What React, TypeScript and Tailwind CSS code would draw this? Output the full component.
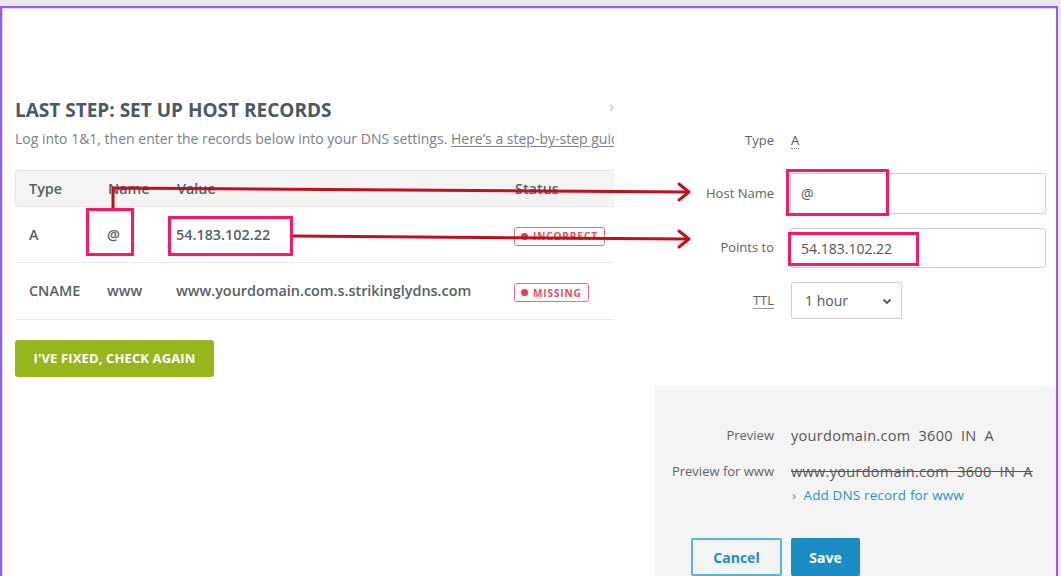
import React from "react";

const Badge = ({ label }: { label: string }) => (
  <span className="inline-flex items-center gap-[5px] rounded-[3px] border border-[#ea6d77] px-[6px] h-[19px] text-[10px] font-bold tracking-[0.09em] text-[#e4505e] leading-none">
    <span className="w-[7px] h-[7px] rounded-full bg-[#e83a4a]" />
    {label}
  </span>
);

export default function App() {
  return (
    <div className="relative w-[1061px] h-[576px] overflow-hidden bg-[#e9eaed] pt-[6px]" style={{ fontFamily: '"Open Sans", "Noto Sans", sans-serif' }}>
      <div className="w-[1058px] h-[600px] border-2 border-[#9c58f7] bg-white">
        <div className="h-full border-l border-t border-[#dcdce3] flex">
          {/* Left column */}
          <div className="w-[611px] pl-[12px] pt-[89px] overflow-hidden shrink-0 relative">
            <div className="absolute right-0 top-[85px] text-[#b8bcc0] text-[16px]">›</div>
            <h1 className="text-[19px] leading-[24px] font-bold text-[#4b5963] whitespace-nowrap">LAST STEP: SET UP HOST RECORDS</h1>
            <p className="mt-[7px] text-[14px] leading-[20px] text-[#7b8188] whitespace-nowrap">
              Log into 1&amp;1, then enter the records below into your DNS settings.{" "}
              <span className="underline underline-offset-2">Here’s a step-by-step guide</span>
            </p>
            <div className="mt-[21px] w-[620px] text-[14.4px] text-[#565f68] font-semibold">
              <div className="h-[37px] flex items-center bg-[#f4f4f4] border border-[#e6e6e6] rounded-l-[3px]">
                <div className="w-[92px] pl-[13px]">Type</div>
                <div className="w-[69px]">Name</div>
                <div className="w-[338px]">Value</div>
                <div>Status</div>
              </div>
              <div className="h-[56px] flex items-center border-b border-[#e8e8e8]">
                <div className="w-[92px] pl-[14px]">A</div>
                <div className="w-[69px]">@</div>
                <div className="w-[338px]">54.183.102.22</div>
                <div><Badge label="INCORRECT" /></div>
              </div>
              <div className="h-[57px] flex items-center border-b border-[#e8e8e8]">
                <div className="w-[92px] pl-[14px]">CNAME</div>
                <div className="w-[69px]">www</div>
                <div className="w-[338px] whitespace-nowrap">www.yourdomain.com.s.strikinglydns.com</div>
                <div><Badge label="MISSING" /></div>
              </div>
            </div>
            <button className="mt-[20px] h-[37px] w-[199px] rounded-[3px] bg-[#96b71b] text-white text-[13px] font-bold tracking-[0.01em]">
              I'VE FIXED, CHECK AGAIN
            </button>
          </div>
          {/* Right column */}
          <div className="flex-1 pl-[41px] pt-[122px] flex flex-col text-[13px] text-[#5f6368]">
            <div className="flex items-center h-[20px]">
              <div className="w-[119px] text-right">Type</div>
              <div className="ml-[17px] text-[#555] border-b border-dotted border-[#888] leading-[15px]">A</div>
            </div>
            <div className="flex items-center mt-[22px]">
              <div className="w-[119px] text-right">Host Name</div>
              <div className="ml-[16px] w-[256px] h-[41px] border border-[#cfcfcf] rounded-[2px] flex items-center pl-[10px] text-[14px] text-[#555]">@</div>
            </div>
            <div className="flex items-center mt-[14px]">
              <div className="w-[119px] text-right">Points to</div>
              <div className="ml-[16px] w-[256px] h-[40px] border border-[#cfcfcf] rounded-[2px] flex items-center pl-[10px] text-[14px] text-[#555]">54.183.102.22</div>
            </div>
            <div className="flex items-center mt-[14px]">
              <div className="w-[119px] text-right"><span className="border-b border-[#999] leading-[15px] inline-block">TTL</span></div>
              <div className="ml-[17px] w-[111px] h-[37px] border border-[#cfcfcf] rounded-[2px] flex items-center justify-between pl-[13px] pr-[8px] text-[14px] text-[#555]">
                <span>1 hour</span>
                <svg width="12" height="12" viewBox="0 0 12 12"><path d="M2.5 4.5 L6 8 L9.5 4.5" fill="none" stroke="#555" strokeWidth="1.8" /></svg>
              </div>
            </div>
            <div className="mt-[67px] flex-1 bg-[#f4f4f4] pt-[41px]">
              <div className="flex items-center h-[18px]">
                <div className="w-[119px] text-right">Preview</div>
                <div className="ml-[17px] text-[14.5px] tracking-[0.02em] text-[#555] whitespace-pre">yourdomain.com  3600  IN  A</div>
              </div>
              <div className="flex items-center h-[18px] mt-[18px]">
                <div className="w-[119px] text-right whitespace-nowrap">Preview for www</div>
                <div className="ml-[17px] text-[14.5px] tracking-[0.02em] text-[#555] whitespace-pre line-through">www.yourdomain.com  3600  IN  A</div>
              </div>
              <div className="ml-[137px] mt-[6px] text-[13.5px] text-[#2196cc] leading-[16px] tracking-[0.01em] whitespace-pre">›  Add DNS record for www</div>
              <div className="flex ml-[36px] mt-[35px] gap-[9px]">
                <button className="w-[91px] h-[38px] border-2 border-[#5bb4da] rounded-[2px] text-[#1f8fc3] font-bold text-[14px]">Cancel</button>
                <button className="w-[69px] h-[38px] bg-[#1a8dc4] rounded-[2px] text-white font-bold text-[14px]">Save</button>
              </div>
            </div>
          </div>
        </div>
      </div>
      <svg className="absolute inset-0 pointer-events-none" width="1061" height="576" viewBox="0 0 1061 576">
        <g fill="none" stroke="#c20f1c" strokeWidth="3" strokeLinejoin="round" strokeLinecap="round">
          <path d="M113 208 L113 188 L688 192" />
          <path d="M679 184 L689 192 L679 200" />
          <path d="M293 236 L688 239" />
          <path d="M679 231 L689 239 L679 247" />
        </g>
        <g fill="none" stroke="#ff1761" strokeWidth="3">
          <rect x="87.5" y="209.5" width="45" height="45" />
          <rect x="169.5" y="217.5" width="122" height="37" />
          <rect x="787.5" y="170.5" width="100" height="44" />
          <rect x="789.5" y="233.5" width="128" height="31" />
        </g>
      </svg>
    </div>
  );
}
